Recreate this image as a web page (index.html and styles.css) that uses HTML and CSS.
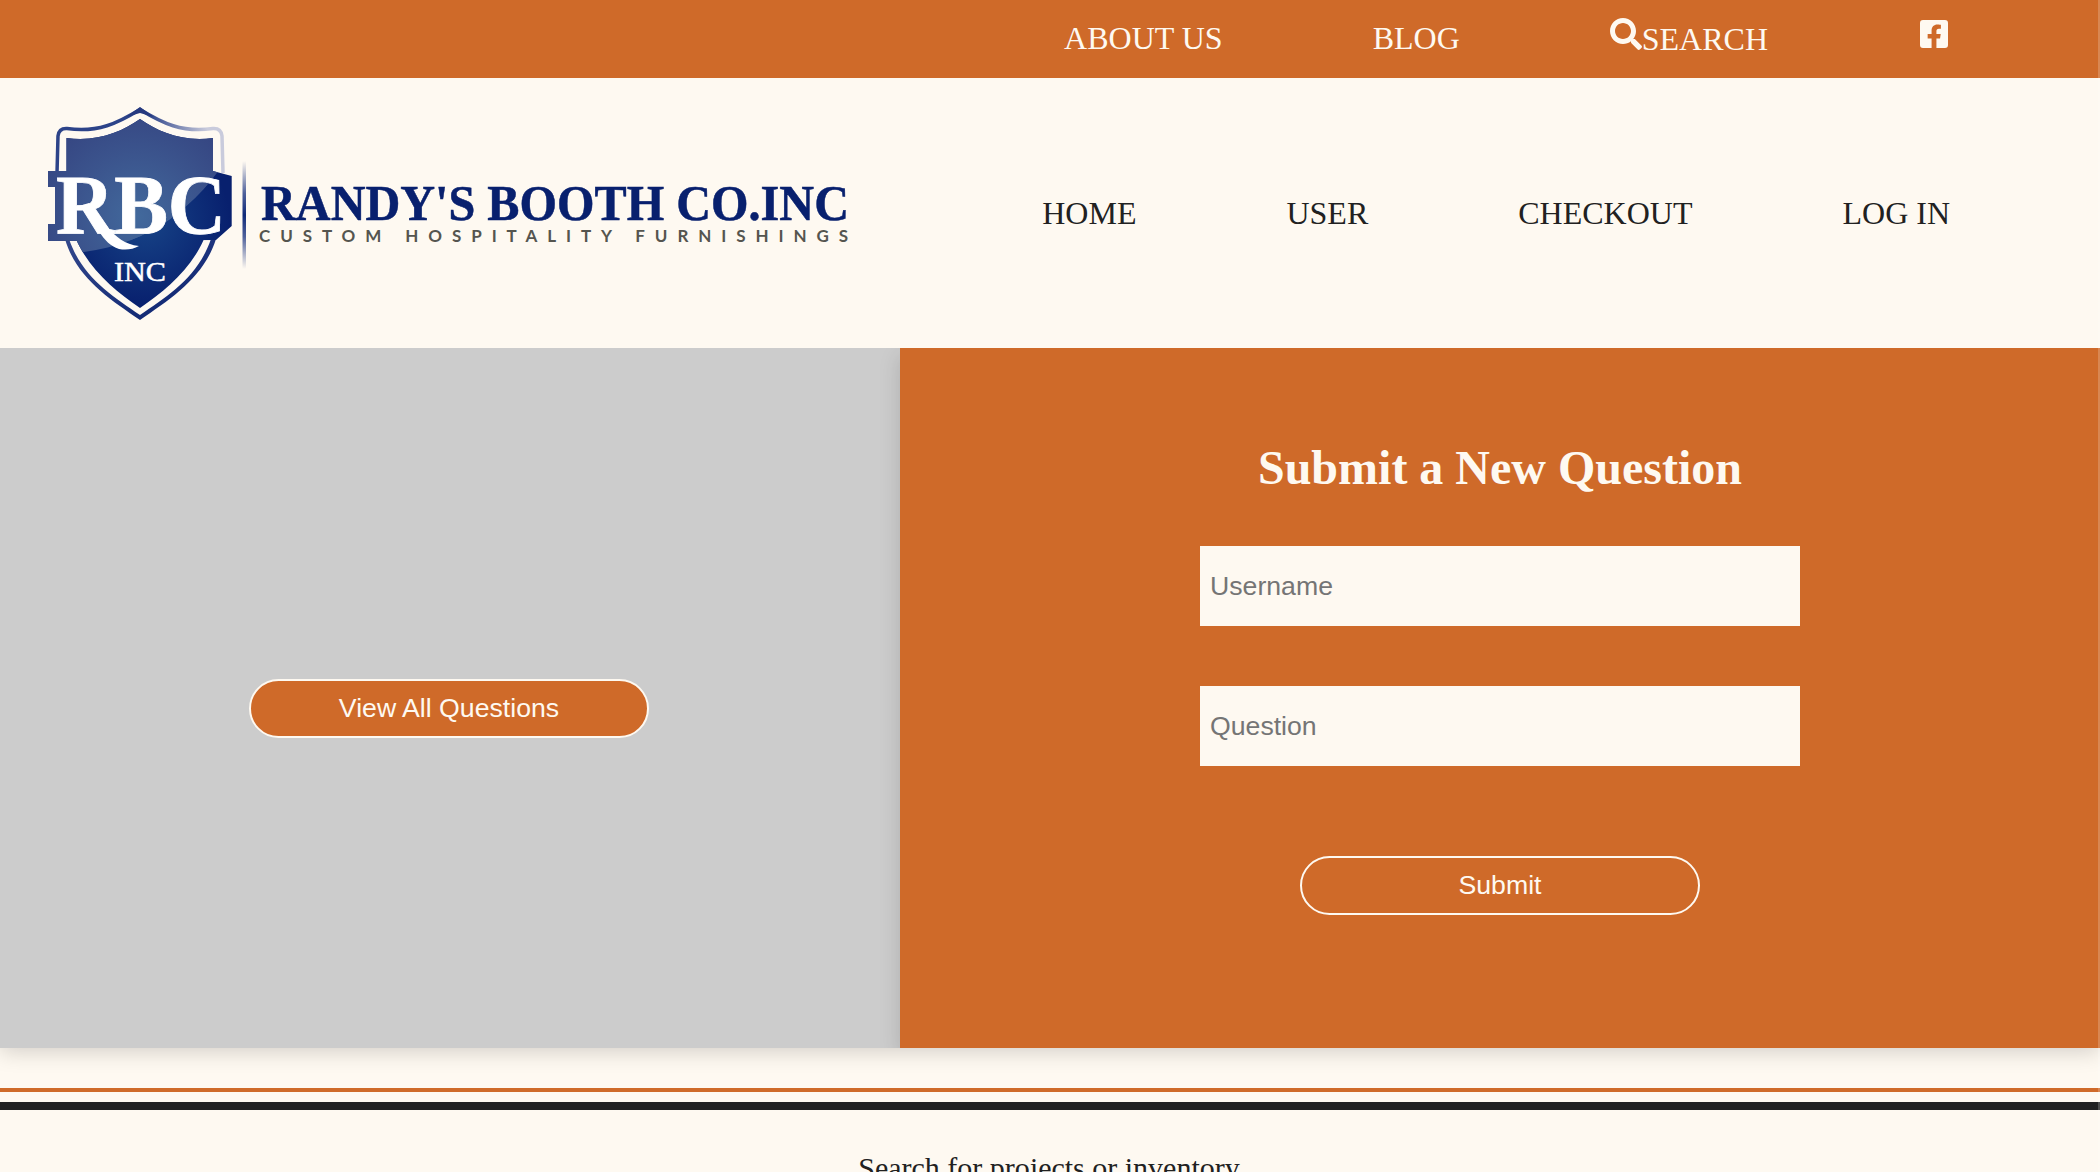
FILE: index.html
```html
<!DOCTYPE html>
<html lang="en">
<head>
<meta charset="utf-8">
<title>Randy's Booth Co. Inc</title>
<link rel="stylesheet" href="styles.css">
</head>
<body>
<div class="topbar">
  <a class="nav-item">ABOUT US</a>
  <a class="nav-item">BLOG</a>
  <a class="nav-item nav-search"><svg class="icon" viewBox="0 0 512 512"><path fill="currentColor" d="M505 442.700L405.300 343c-4.500-4.500-10.600-7-17-7H372c27.600-35.300 44-79.700 44-128C416 93.100 322.900 0 208 0S0 93.100 0 208s93.100 208 208 208c48.300 0 92.700-16.400 128-44v16.300c0 6.400 2.500 12.500 7 17l99.700 99.700c9.400 9.400 24.600 9.400 33.900 0l28.300-28.300c9.400-9.400 9.400-24.600.1-34zM208 336c-70.700 0-128-57.200-128-128 0-70.700 57.200-128 128-128 70.700 0 128 57.200 128 128 0 70.700-57.200 128-128 128z"/></svg><span>SEARCH</span></a>
  <a class="nav-social"><svg class="icon" viewBox="0 0 448 512"><path fill="currentColor" d="M400 32H48A48 48 0 0 0 0 80v352a48 48 0 0 0 48 48h137.250V327.690h-63V256h63v-54.640c0-62.150 37-96.480 93.670-96.480 27.140 0 55.520 4.840 55.520 4.840v61h-31.270c-30.810 0-40.420 19.120-40.420 38.730V256h68.780l-11 71.690h-57.780V480H400a48 48 0 0 0 48-48V80a48 48 0 0 0-48-48z"/></svg></a>
</div>
<header class="header">
  <svg class="logo" viewBox="48 106 800 213">
    <defs>
      <linearGradient id="edge" x1="0" y1="0" x2="1" y2="1">
        <stop offset="0" stop-color="#33488c"/><stop offset="1" stop-color="#08206e"/>
      </linearGradient>
      <radialGradient id="gloss" gradientUnits="userSpaceOnUse" cx="138" cy="215" r="105">
        <stop offset="0" stop-color="#42699c"/><stop offset=".6" stop-color="#3b548d"/><stop offset="1" stop-color="#364783"/>
      </radialGradient>
      <radialGradient id="deep" gradientUnits="userSpaceOnUse" cx="145" cy="220" r="85">
        <stop offset="0" stop-color="#174487"/><stop offset="1" stop-color="#08206e"/>
      </radialGradient>
      <linearGradient id="rule" x1="0" y1="0" x2="0" y2="1">
        <stop offset="0" stop-color="#223a85" stop-opacity="0"/><stop offset=".3" stop-color="#223a85" stop-opacity=".8"/><stop offset=".5" stop-color="#102a78"/><stop offset=".7" stop-color="#223a85" stop-opacity=".8"/><stop offset="1" stop-color="#223a85" stop-opacity="0"/>
      </linearGradient>
      <linearGradient id="fade" gradientUnits="userSpaceOnUse" x1="56" y1="0" x2="224" y2="0">
        <stop offset=".55" stop-color="#2c4389"/><stop offset=".9" stop-color="#c9cbdc"/>
      </linearGradient>
      <clipPath id="glossArea"><path d="M48 106H234V148C195 208 150 242 84 251L48 256Z"/></clipPath>
    </defs>
    <path fill="none" stroke="url(#fade)" stroke-width="3.500" d="M57 172L58 135Q59 127 67 127.500C98 132 118 122 140 108.500C162 122 182 132 213 127.500Q221 127 222 135L223 172"/>
    <path fill="url(#edge)" d="M65 238C76 276 108 297 140 319C172 297 204 276 216 238Z"/>
    <path fill="#26397f" d="M126 116L140 106L154 116L140 112Z"/>
    <path fill="#fef9f1" d="M69 238C82 276 112 295 140 314C168 295 198 276 211 238Z"/>
    <path fill="url(#deep)" d="M66.500 170V137C98 141 121 131 140 118C159 131 182 141 213 137V170L217 238H204C191 268 165 290 140 307C115 290 89 268 76 238H65Z"/>
    <path fill="url(#deep)" d="M48 170H213L231.700 175V225L216 239L48 240V223H55V186H48Z"/>
    <g clip-path="url(#glossArea)" fill="url(#gloss)">
      <path d="M66.500 170V137C98 141 121 131 140 118C159 131 182 141 213 137V170L217 238H204C191 268 165 290 140 307C115 290 89 268 76 238H65Z"/>
      <path d="M48 170H213L231.700 175V225L216 239L48 240V223H55V186H48Z"/>
    </g>
    <g class="logo-letters">
      <path d="M79 205L89 202C102 214 111 242 139 245Q130 250 119 248C102 243 96 221 79 205Z"/>
      <text class="logo-rbc" x="56" y="233" font-size="84" textLength="170" lengthAdjust="spacingAndGlyphs">RBC</text>
      <text class="logo-inc" x="114" y="279.500" font-size="28" textLength="52" lengthAdjust="spacingAndGlyphs">INC</text>
    </g>
    <rect x="242.500" y="160" width="3.500" height="108" fill="url(#rule)"/>
    <text class="logo-name" x="261" y="219" font-size="51" textLength="588" lengthAdjust="spacingAndGlyphs">RANDY'S BOOTH CO.INC</text>
    <text class="logo-tag" x="259" y="241" font-size="17" textLength="589">CUSTOM HOSPITALITY FURNISHINGS</text>
  </svg>
  <nav class="main-nav">
    <a class="nav-item">HOME</a>
    <a class="nav-item">USER</a>
    <a class="nav-item">CHECKOUT</a>
    <a class="nav-item">LOG IN</a>
  </nav>
</header>
<main class="questions">
  <section class="view-panel">
    <button class="pill">View All Questions</button>
  </section>
  <form class="submit-panel">
    <h1 class="form-title">Submit a New Question</h1>
    <input class="field" placeholder="Username">
    <input class="field" placeholder="Question">
    <button class="pill pill-submit" type="button">Submit</button>
  </form>
</main>
<footer class="footer">
  <div class="footer-body">Search for projects or inventory</div>
</footer>
<div class="scroll-edge"></div>
</body>
</html>
```
FILE: styles.css
```css
* { box-sizing: border-box; }
html, body { height: 100%; }
body {
  margin: 0;
  overflow: hidden;
  background: #fef9f1;
  color: #212121;
  font-family: "Liberation Serif", "Times New Roman", serif;
  font-size: 32px;
}
.topbar {
  display: flex;
  justify-content: flex-end;
  gap: 150px;
  height: 78px;
  padding: 18px 150px 0 0;
  background: #cf6a29;
  color: #fef9f1;
  line-height: 40px;
}
.nav-item { white-space: nowrap; }
.nav-search { display: flex; }
.nav-search span { padding-top: 1px; }
.icon { display: block; width: 32px; height: 32px; }
.header {
  display: flex;
  align-items: center;
  justify-content: space-between;
  height: 270px;
  padding: 0 150px 0 48px;
}
.logo { display: block; width: 800px; height: 213px; overflow: visible; }
.logo-letters { fill: #fff; font-family: "Liberation Serif", serif; font-weight: bold; }
.logo-rbc { stroke: #fff; stroke-width: .8px; }
.logo-inc { font-weight: normal; stroke: #fff; stroke-width: .5px; }
.logo-name { fill: #08206e; stroke: #08206e; stroke-width: .5px; font-family: "Liberation Serif", serif; font-weight: bold; }
.logo-tag { fill: #55554f; font-family: Lato, sans-serif; font-weight: bold; }
.main-nav { display: flex; gap: 150px; }
.questions {
  display: flex;
  height: 700px;
  box-shadow: 0 4px 20px rgba(0, 0, 0, .17);
  clip-path: inset(0 0 -40px 0);
}
.view-panel {
  display: flex;
  align-items: center;
  justify-content: center;
  width: 900px;
  padding: 21px 2px 0 0;
  background: #ccc;
}
.submit-panel {
  display: flex;
  flex: 1;
  flex-direction: column;
  align-items: center;
  background: #cf6a29;
  color: #fef9f1;
  box-shadow: 0 8px 20px rgba(0, 0, 0, .15);
  clip-path: inset(0 0 0 -30px);
}
.form-title { margin: 92px 0 50px; font-size: 48px; line-height: 56px; }
.field {
  width: 600px;
  height: 80px;
  margin: 0 0 60px;
  padding: 0 10px;
  border: 0;
  background: #fef9f1;
  font: 26.667px "Liberation Sans", Arial, sans-serif;
}
.field::placeholder { color: #757575; }
.pill {
  width: 400px;
  height: 59px;
  padding: 0;
  border: 2px solid #fef9f1;
  border-radius: 30px;
  background: #cf6a29;
  color: #fef9f1;
  font: 26.667px "Liberation Sans", Arial, sans-serif;
}
.pill-submit { margin-top: 30px; }
.footer { margin-top: 40px; border-top: 4px solid #cf6a29; padding-top: 10px; }
.footer-body {
  height: 70px;
  padding: 40px 2px 0 0;
  border-top: 8px solid #212121;
  font-size: 30px;
  line-height: 36px;
  text-align: center;
}
.scroll-edge {
  position: absolute;
  top: 0;
  right: 0;
  width: 2px;
  height: 100%;
  background: rgba(255, 255, 255, .2);
}
```
